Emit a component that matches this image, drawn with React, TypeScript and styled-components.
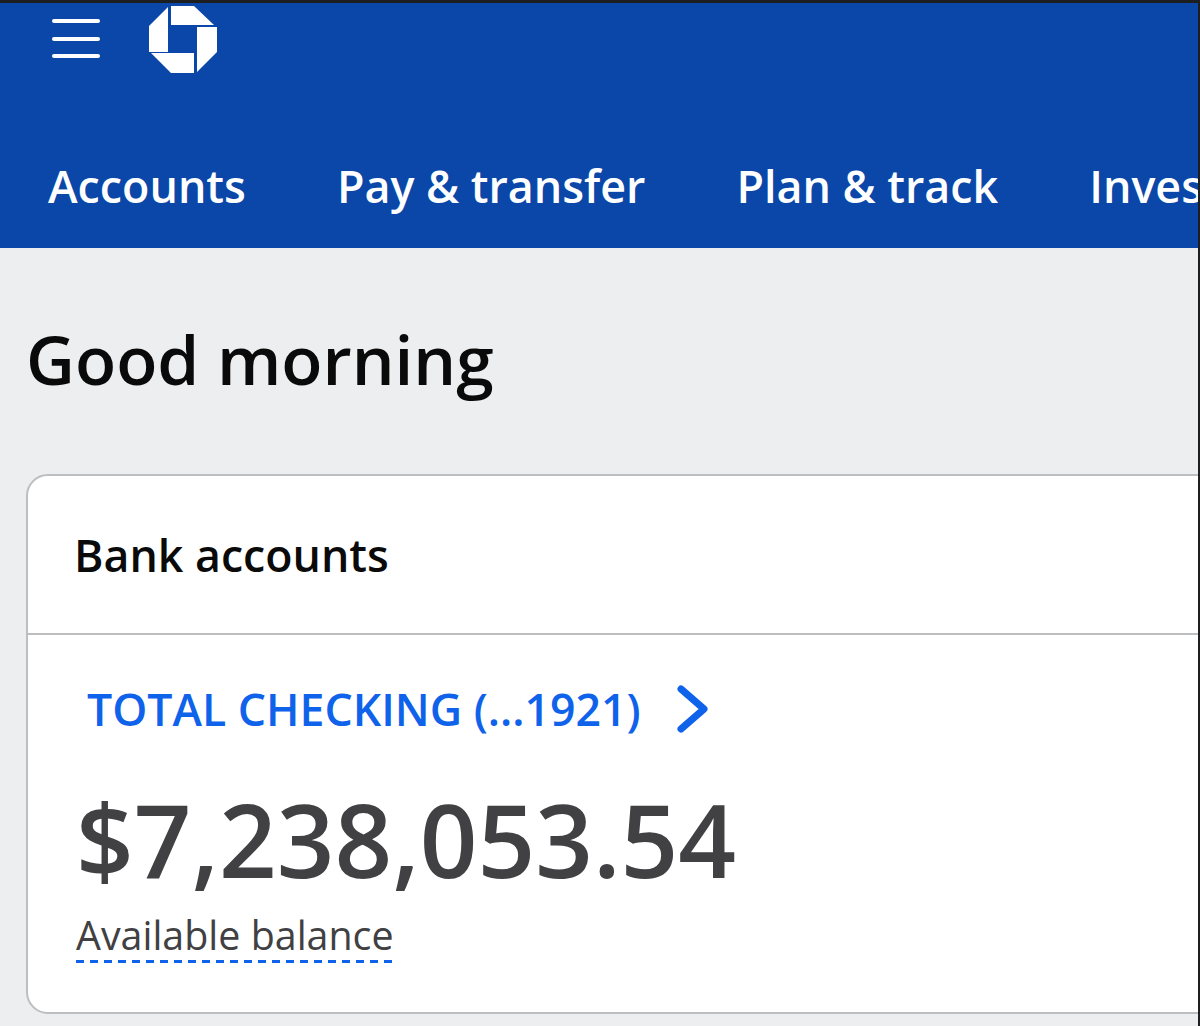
import React from "react";
import styled, { createGlobalStyle } from "styled-components";

const GlobalStyle = createGlobalStyle`
  html, body {
    margin: 0;
    padding: 0;
    background: #edeef0;
    font-family: "Open Sans", "Liberation Sans", sans-serif;
  }
`;

const Page = styled.div`
  width: 1200px;
  height: 1026px;
  overflow: hidden;
  background: #edeef0;
  border-top: 3px solid #1d1e20;
  border-right: 2px solid #1d1e20;
  box-sizing: border-box;
`;

const Header = styled.header`
  height: 245px;
  background: #0a47a8;
  overflow: hidden;
`;

const TopBar = styled.div`
  display: flex;
  align-items: flex-start;
  gap: 49px;
  padding: 2px 0 0 52px;
  height: 100px;
`;

const MenuButton = styled.div`
  display: flex;
  flex-direction: column;
  gap: 13.5px;
  padding-top: 14px;
  width: 48px;
`;

const MenuLine = styled.span`
  display: block;
  height: 4px;
  border-radius: 2px;
  background: #fff;
`;

const Nav = styled.nav`
  display: flex;
  gap: 91px;
  padding: 51px 0 0 48px;
  white-space: nowrap;
`;

const NavItem = styled.span`
  color: #fff;
  font-size: 44.8px;
  font-weight: 600;
  line-height: 60px;
`;

const Main = styled.main`
  padding: 68px 0 0 26px;
`;

const Greeting = styled.h1`
  margin: 0 0 72px;
  color: #0a0a0a;
  font-size: 67.5px;
  font-weight: 600;
  line-height: 86px;
`;

const Card = styled.section`
  margin-right: -20px;
  background: #fff;
  border: 2px solid #bdbec0;
  border-radius: 22px;
  height: 540px;
  box-sizing: border-box;
`;

const CardHeader = styled.div`
  height: 157px;
  padding-left: 46px;
  display: flex;
  align-items: center;
  border-bottom: 2px solid #bdbec0;
  color: #0a0a0a;
  font-size: 44.7px;
  font-weight: 600;
`;

const CardBody = styled.div`
  padding: 45px 0 0 48px;
`;

const AccountLink = styled.div`
  display: flex;
  align-items: center;
  gap: 36px;
  padding-left: 11px;
  color: #0f62ea;
  font-size: 44.6px;
  font-weight: 600;
  line-height: 58px;
`;

const Balance = styled.div`
  margin-top: 41px;
  color: #414042;
  font-size: 101px;
  font-weight: 600;
  line-height: 120px;
`;

const BalanceLabel = styled.span`
  display: inline-block;
  position: relative;
  margin-top: 10px;
  color: #414042;
  font-size: 39.4px;
  line-height: 52px;
  padding-bottom: 2px;
  &::after {
    content: "";
    position: absolute;
    left: 0;
    right: 0;
    bottom: 0;
    height: 3px;
    background: repeating-linear-gradient(90deg, #0f62ea 0 8px, transparent 8px 14px);
  }
`;

const ChaseLogo = () => (
  <svg width="70" height="70" viewBox="0 0 70 70" fill="#fff">
    <path d="M22 1H45L65 20H22Z" />
    <path d="M48 22H68V47L48 67Z" />
    <path d="M2 48H45V68H22Z" />
    <path d="M19 2V47H0V21Z" />
  </svg>
);

const Chevron = () => (
  <svg width="32" height="48" viewBox="0 0 32 48" fill="none">
    <path d="M4 4L27 24L4 44" stroke="#0f62ea" strokeWidth="7" strokeLinecap="round" strokeLinejoin="round" />
  </svg>
);

const navItems = ["Accounts", "Pay & transfer", "Plan & track", "Investments"];

export default function App() {
  return (
    <Page>
      <GlobalStyle />
      <Header>
        <TopBar>
          <MenuButton>
            <MenuLine />
            <MenuLine />
            <MenuLine />
          </MenuButton>
          <ChaseLogo />
        </TopBar>
        <Nav>
          {navItems.map((item) => (
            <NavItem key={item}>{item}</NavItem>
          ))}
        </Nav>
      </Header>
      <Main>
        <Greeting>Good morning</Greeting>
        <Card>
          <CardHeader>Bank accounts</CardHeader>
          <CardBody>
            <AccountLink>
              TOTAL CHECKING (...1921)
              <Chevron />
            </AccountLink>
            <Balance>$7,238,053.54</Balance>
            <BalanceLabel>Available balance</BalanceLabel>
          </CardBody>
        </Card>
      </Main>
    </Page>
  );
}
